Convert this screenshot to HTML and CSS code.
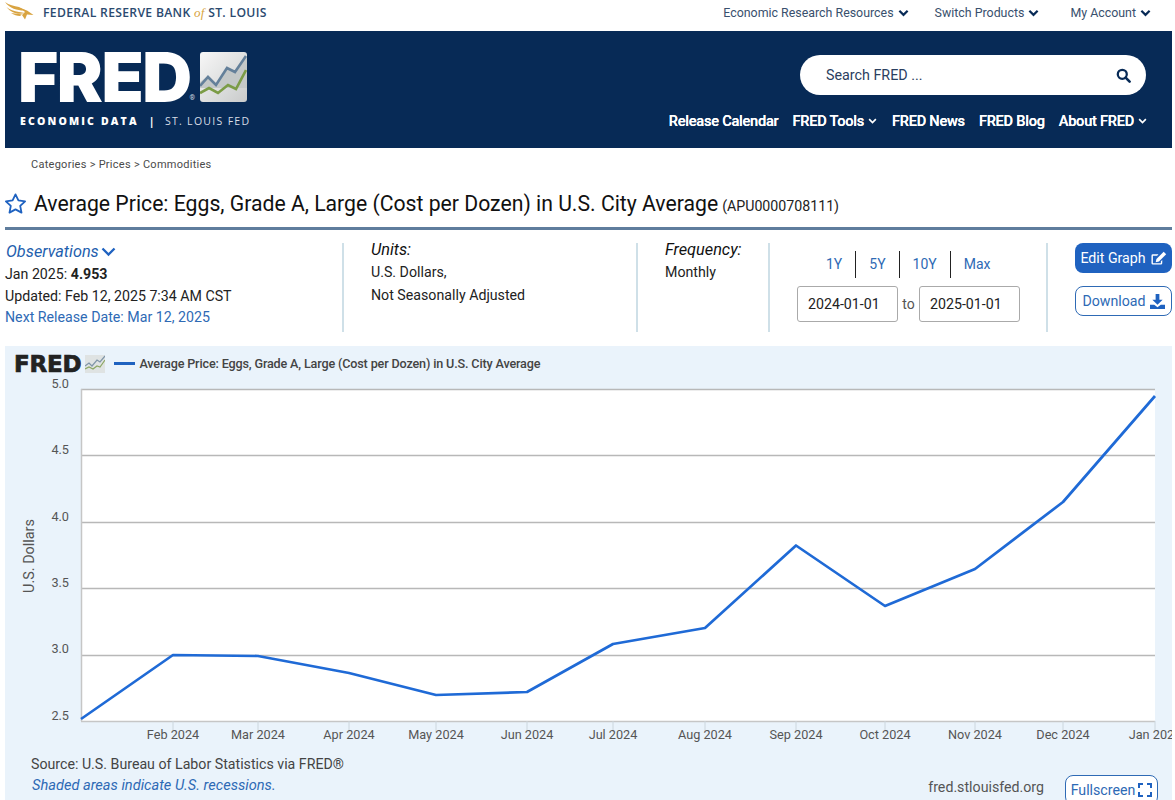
FILE: index.html
```html
<!DOCTYPE html>
<html lang="en">
<head>
<meta charset="utf-8">
<title>FRED</title>
<link rel="stylesheet" href="styles.css">
</head>
<body>
<div class="topbar">
  <a class="frb">
    <svg class="eagle" viewBox="0 0 30 18" width="30" height="18"><path d="M0 0C4 3 9 4 14 5L21 8.500C14 9 5 7 0 0Z" fill="#d9a441"/><path d="M1.500 5C5 8 9 9 14 10L20 11C13 13 6 11 1.500 5Z" fill="#d9a441"/><path d="M6 11C9 13 12 14 15 14L17 12.500L14 12Z" fill="#d9a441"/><path d="M15 6L22 8.500L28.500 13L22 12.500L20 17.500L17 13L20 10Z" fill="#d9a441"/></svg>
    <span class="frb-text">FEDERAL RESERVE BANK <i class="frb-of">of</i> ST. LOUIS</span>
  </a>
  <nav class="topnav">
    <a>Economic Research Resources <svg class="chev" viewBox="0 0 12 8"><path d="M1.500 1.500L6 6L10.500 1.500" /></svg></a>
    <a>Switch Products <svg class="chev" viewBox="0 0 12 8"><path d="M1.500 1.500L6 6L10.500 1.500" /></svg></a>
    <a class="account">My Account <svg class="chev" viewBox="0 0 12 8"><path d="M1.500 1.500L6 6L10.500 1.500" /></svg></a>
  </nav>
</div>

<header class="masthead">
  <div class="brand">
    <div class="brand-top">
      <span class="fred-word">FRED</span><span class="reg">®</span>
      <svg class="brand-icon" viewBox="0 0 47 50" width="47" height="50">
        <defs><linearGradient id="g1" x1="0" y1="0" x2="1" y2="1"><stop offset="0" stop-color="#f7f7f7"/><stop offset="1" stop-color="#c9cbcb"/></linearGradient></defs>
        <rect width="47" height="50" rx="3" fill="url(#g1)"/>
        <path d="M0 30L8 24L15 33L27 16L35 20L47 4V36H0Z" fill="#c4c8c8"/>
        <path d="M0 34L8 25L16 33L27 16L35 20L46 4" fill="none" stroke="#64809a" stroke-width="2.600"/>
        <path d="M0 41L9 36L18 41L28 33L36 37L46 18" fill="none" stroke="#7b9c46" stroke-width="2.600"/>
      </svg>
    </div>
    <div class="brand-sub"><b>ECONOMIC DATA</b><span class="brand-bar">|</span><span>ST. LOUIS FED</span></div>
  </div>
  <div class="mast-right">
    <div class="search"><span>Search FRED ...</span>
      <svg viewBox="0 0 16 16" width="15" height="15"><circle cx="6.700" cy="6.700" r="4.800" fill="none" stroke="#072a56" stroke-width="2.400"/><path d="M10.300 10.300L14.500 14.500" stroke="#072a56" stroke-width="2.800" stroke-linecap="round"/></svg>
    </div>
    <nav class="mainnav">
      <a>Release Calendar</a>
      <a class="tools">FRED Tools <svg class="chev small" viewBox="0 0 12 8"><path d="M1.500 1.500L6 6L10.500 1.500" /></svg></a>
      <a>FRED News</a>
      <a>FRED Blog</a>
      <a>About FRED <svg class="chev small" viewBox="0 0 12 8"><path d="M1.500 1.500L6 6L10.500 1.500" /></svg></a>
    </nav>
  </div>
</header>

<div class="crumbs">Categories &gt; Prices &gt; Commodities</div>

<div class="titlerow">
  <svg class="star" viewBox="1.500 1.500 21 20.500" width="21" height="21"><path d="M12 2.600L14.900 8.700L21.600 9.600L16.700 14.200L18 20.900L12 17.600L6 20.900L7.300 14.200L2.400 9.600L9.100 8.700Z" fill="none" stroke="#1f62c0" stroke-width="1.800" stroke-linejoin="round"/></svg>
  <h1>Average Price: Eggs, Grade A, Large (Cost per Dozen) in U.S. City Average</h1>
  <span class="series-id">(APU0000708111)</span>
</div>

<section class="meta">
  <div class="col col-obs">
    <a class="obs-head">Observations <svg class="chev obs" viewBox="0 0 12 8"><path d="M1.200 1.200L6 6L10.800 1.200" /></svg></a>
    <div class="line">Jan 2025: <b>4.953</b></div>
    <div class="line">Updated: Feb 12, 2025 7:34 AM CST</div>
    <a class="line blue">Next Release Date: Mar 12, 2025</a>
  </div>
  <div class="col col-units">
    <div class="label">Units:</div>
    <div class="line">U.S. Dollars,</div>
    <div class="line">Not Seasonally Adjusted</div>
  </div>
  <div class="col col-freq">
    <div class="label">Frequency:</div>
    <div class="line">Monthly</div>
  </div>
  <div class="col col-range">
    <div class="ranges"><a>1Y</a><a>5Y</a><a>10Y</a><a>Max</a></div>
    <div class="dates"><span class="date">2024-01-01</span><span class="to">to</span><span class="date">2025-01-01</span></div>
  </div>
  <div class="col-btns">
    <a class="btn solid">Edit Graph
      <svg viewBox="0 0 18 16" width="17" height="15"><path d="M13 9.500V13a1.500 1.500 0 0 1-1.500 1.500H3A1.500 1.500 0 0 1 1.500 13V5A1.500 1.500 0 0 1 3 3.500H9L7.500 5H3V13H11.500V11Z" fill="#fff"/><path d="M14.500 .8L17.200 3.500L9.500 11.200L6 12L6.800 8.500Z" fill="#fff"/></svg></a>
    <a class="btn outline">Download
      <svg viewBox="0 0 16 16" width="15" height="15"><path d="M6 0H10V6H13.500L8 11.500L2.500 6H6Z" fill="#1f62c0"/><path d="M0 11.500H4.500L8 14L11.500 11.500H16V16H0Z" fill="#1f62c0"/></svg></a>
  </div>
</section>

<section class="panel">
  <div class="legend">
    <span class="mini-fred">FRED</span>
    <svg class="mini-icon" viewBox="0 0 20 18" width="20" height="18"><rect width="20" height="18" fill="#dfe3e3"/><path d="M0 11L4 8L7 11L12 5L15 7L20 1" fill="none" stroke="#7f95a8" stroke-width="1.200"/><path d="M0 14L4 12L8 14L12 11L15 12L20 5" fill="none" stroke="#8ca765" stroke-width="1.200"/></svg>
    <span class="swatch"></span>
    <span class="legend-text">Average Price: Eggs, Grade A, Large (Cost per Dozen) in U.S. City Average</span>
  </div>
  <svg class="chart" viewBox="0 0 1167 393" width="1167" height="393">
    <rect x="76" y="25" width="1074" height="332" fill="#fff"/>
    <g class="grid">
      <path d="M76 25.500H1150M76 91.500H1150M76 158.500H1150M76 224.500H1150M76 291.500H1150"/>
    </g>
    <path class="axis" d="M76.500 25V357M76 357.500H1150"/>
    <path class="ticks" d="M168 357V368M253 357V368M344 357V368M431 357V368M522 357V368M608 357V368M700 357V368M791 357V368M880 357V368M970 357V368M1058 357V368M1150 357V368"/>
    <path class="series" d="M76 355L168 291L253 292L344 309L431 331L522 328L608 280L700 264L791 181.500L880 242L970 205L1058 138L1150 32"/>
    <g class="ylab">
      <text x="64" y="24">5.0</text><text x="64" y="90">4.5</text><text x="64" y="157">4.0</text><text x="64" y="223">3.5</text><text x="64" y="289">3.0</text><text x="64" y="356">2.5</text>
    </g>
    <text class="ytitle" transform="translate(29 192) rotate(-90)">U.S. Dollars</text>
    <g class="xlab">
      <text x="168" y="375">Feb 2024</text><text x="253" y="375">Mar 2024</text><text x="344" y="375">Apr 2024</text><text x="431" y="375">May 2024</text><text x="522" y="375">Jun 2024</text><text x="608" y="375">Jul 2024</text><text x="700" y="375">Aug 2024</text><text x="791" y="375">Sep 2024</text><text x="880" y="375">Oct 2024</text><text x="970" y="375">Nov 2024</text><text x="1058" y="375">Dec 2024</text><text x="1150" y="375">Jan 2025</text>
    </g>
  </svg>
  <div class="panel-foot">
    <div class="notes">
      <div class="src">Source: U.S. Bureau of Labor Statistics via FRED®</div>
      <a class="shade">Shaded areas indicate U.S. recessions.</a>
    </div>
    <div class="foot-right">
      <span class="site">fred.stlouisfed.org</span>
      <a class="btn outline full">Fullscreen
        <svg viewBox="0 0 14 14" width="14" height="14"><path d="M1 5V1H5M9 1H13V5M13 9V13H9M5 13H1V9" fill="none" stroke="#1f62c0" stroke-width="2"/></svg></a>
    </div>
  </div>
</section>
</body>
</html>
```

FILE: styles.css
```css
* { box-sizing: border-box; }
html, body { margin: 0; padding: 0; height: 800px; overflow: hidden; background: #fff; }
body { font-family: Roboto, "Liberation Sans", sans-serif; color: #222; font-size: 14.200px; }
a { text-decoration: none; }

.topbar { height: 31px; display: flex; justify-content: space-between; align-items: center; padding: 0 24px 6px 5px; }
.frb { display: flex; align-items: center; gap: 8px; }
.eagle { display: block; margin-top: -3px; }
.frb-text { font-family: "Open Sans", sans-serif; font-weight: 600; font-size: 12.200px; letter-spacing: .3px; color: #2b4a6f; white-space: nowrap; }
.frb-of { font-family: "Liberation Serif", serif; font-weight: 400; color: #d9a441; font-size: 13px; }
.topnav { display: flex; gap: 26px; }
.topnav a { color: #39506d; font-size: 12.400px; display: flex; align-items: center; gap: 4px; white-space: nowrap; }
.topnav .account { margin-left: 5px; }
.chev { width: 11px; height: 8px; fill: none; stroke: #072a56; stroke-width: 2.400; }
.chev.small { width: 9px; height: 6px; stroke: #fff; stroke-width: 2.200; }
.chev.obs { width: 15px; height: 10px; stroke: #1f62c0; stroke-width: 1.900; }

.masthead { margin: 0 3px 0 5px; height: 117px; background: #072a56; display: flex; justify-content: space-between; padding: 21px 25px 0 13px; }
.brand { color: #fff; }
.brand-top { display: flex; align-items: flex-start; height: 50px; }
.fred-word { font-family: Inter, sans-serif; font-weight: 900; font-size: 69px; line-height: 50px; letter-spacing: -1.500px; color: #fff; }
.reg { font-size: 7px; margin: 42px 0 0 -1px; color: #d5dbe4; width: 10px; }
.brand-icon { display: block; }
.brand-sub { margin: 12px 0 0 2px; font-family: "Open Sans", sans-serif; font-size: 10.500px; letter-spacing: 1.300px; white-space: nowrap; color: #d7dde6; display: flex; }
.brand-sub b { color: #fff; font-weight: 800; letter-spacing: 2.170px; }
.brand-bar { margin: 0 9px 0 10px; color: #fff; font-weight: 700; }

.mast-right { display: flex; flex-direction: column; align-items: flex-end; }
.search { width: 346px; height: 40px; margin: 3px 1px 0 0; background: #fff; border-radius: 20px; display: flex; justify-content: space-between; align-items: center; padding: 0 15px 0 26px; color: #2b4060; font-size: 14.300px; }
.mainnav { display: flex; gap: 14px; margin-top: 17px; }
.mainnav a { color: #fff; font-weight: 500; font-size: 14.600px; letter-spacing: -.25px; display: flex; align-items: center; gap: 4px; white-space: nowrap; text-shadow: 0 0 .5px #fff; }
.mainnav .tools { margin-right: 1px; }

.crumbs { height: 32px; padding: 10px 0 0 31px; font-size: 11px; letter-spacing: .27px; color: #4a4a4a; }

.titlerow { display: flex; align-items: center; margin: 0 3px 0 5px; height: 50px; border-bottom: 3px solid #5f7d9d; }
.star { margin: 0 8px 0 0; flex: none; }
.titlerow h1 { margin: 0; font-size: 21.200px; font-weight: 400; color: #111; white-space: nowrap; }
.series-id { font-size: 14.200px; margin-left: 4px; color: #222; padding-top: 4px; }

.meta { display: flex; margin: 13px 3px 0 5px; height: 89px; }
.col { border-right: 2px solid #cfe0e8; height: 89px; flex: none; }
.col-obs { width: 339px; }
.col-units { width: 294px; padding-left: 27px; }
.col-freq { width: 132px; padding-left: 27px; }
.col-range { width: 278px; padding-left: 27px; }
.col-btns { flex: 1; padding-left: 27px; display: flex; flex-direction: column; gap: 13px; }
.obs-head { display: flex; align-items: center; gap: 2px; padding-left: 1px; color: #1f5fae; font-style: italic; font-size: 16.300px; height: 17px; margin-bottom: 4px; }
.line { display: block; font-size: 14.200px; line-height: 21.700px; color: #222; white-space: nowrap; }
.line.blue { color: #2e6ab5; }
.label { font-style: italic; font-size: 16.300px; height: 21px; margin-top: -3px; color: #111; }
.col-units .line, .col-freq .line { line-height: 23px; }
.ranges { display: flex; height: 27px; margin-top: 8px; align-items: center; padding-left: 29px; }
.ranges a { color: #2e6ab5; font-size: 14px; padding: 0 13px; height: 27px; line-height: 26px; border-right: 1px solid #222; }
.ranges a:first-child { padding-left: 0; }
.ranges a:last-child { border: 0; }
.dates { display: flex; align-items: center; margin-top: 8px; }
.date { width: 101px; height: 36px; border: 1px solid #aaa; border-radius: 3px; line-height: 34px; padding-left: 10px; font-size: 14.200px; color: #222; }
.to { width: 21px; text-align: center; color: #555; font-size: 14px; }
.btn { display: flex; align-items: center; justify-content: center; gap: 4px; border-radius: 8px; font-size: 14.200px; white-space: nowrap; }
.btn.solid { width: 97px; height: 30px; background: #1f62c0; color: #fff; }
.btn.outline { width: 97px; height: 30px; background: #fff; color: #2e6ab5; border: 1px solid #2e6ab5; }

.panel { margin: 14px 3px 0 5px; height: 454px; background: #eaf3fb; overflow: hidden; }
.legend { display: flex; align-items: center; height: 33px; padding: 2px 0 0 9px; }
.mini-fred { font-family: "DejaVu Sans", sans-serif; font-weight: 700; font-size: 23px; line-height: 22px; letter-spacing: -.2px; color: #222; -webkit-text-stroke: .7px #222; }
.mini-icon { margin-left: 4px; }
.swatch { width: 21px; height: 3px; background: #1f62c0; margin: 0 4px 0 9px; }
.legend-text { font-size: 12.600px; font-weight: 500; color: #444; letter-spacing: -.15px; white-space: nowrap; }
.chart { display: block; margin-top: -15px; font-family: Roboto, sans-serif; }
.grid path { stroke: #b8b8b8; stroke-width: 1.300; fill: none; }
.axis { stroke: #c6c6c6; stroke-width: 1.500; fill: none; }
.ticks { stroke: #ccd6dd; stroke-width: 1; fill: none; }
.series { fill: none; stroke: #1f6ad6; stroke-width: 2.700; stroke-linejoin: round; }
.ylab text { font-size: 12.700px; fill: #555; text-anchor: end; }
.xlab text { font-size: 12.700px; fill: #555; text-anchor: middle; }
.ytitle { font-size: 14.400px; fill: #555; text-anchor: middle; }
.panel-foot { display: flex; justify-content: space-between; margin-top: -3px; padding: 0 14px 0 26px; }
.src { font-size: 14.200px; color: #444; line-height: 21px; }
.shade { font-size: 14.600px; font-style: italic; color: #2e6ab5; line-height: 21px; display: block; padding-left: 1px; }
.foot-right { display: flex; gap: 21px; align-items: flex-start; padding-top: 21px; }
.site { font-size: 14.200px; color: #555; padding-top: 4px; }
.btn.full { width: 93px; height: 30px; gap: 3px; border-color: #2e6ab5; }
```
